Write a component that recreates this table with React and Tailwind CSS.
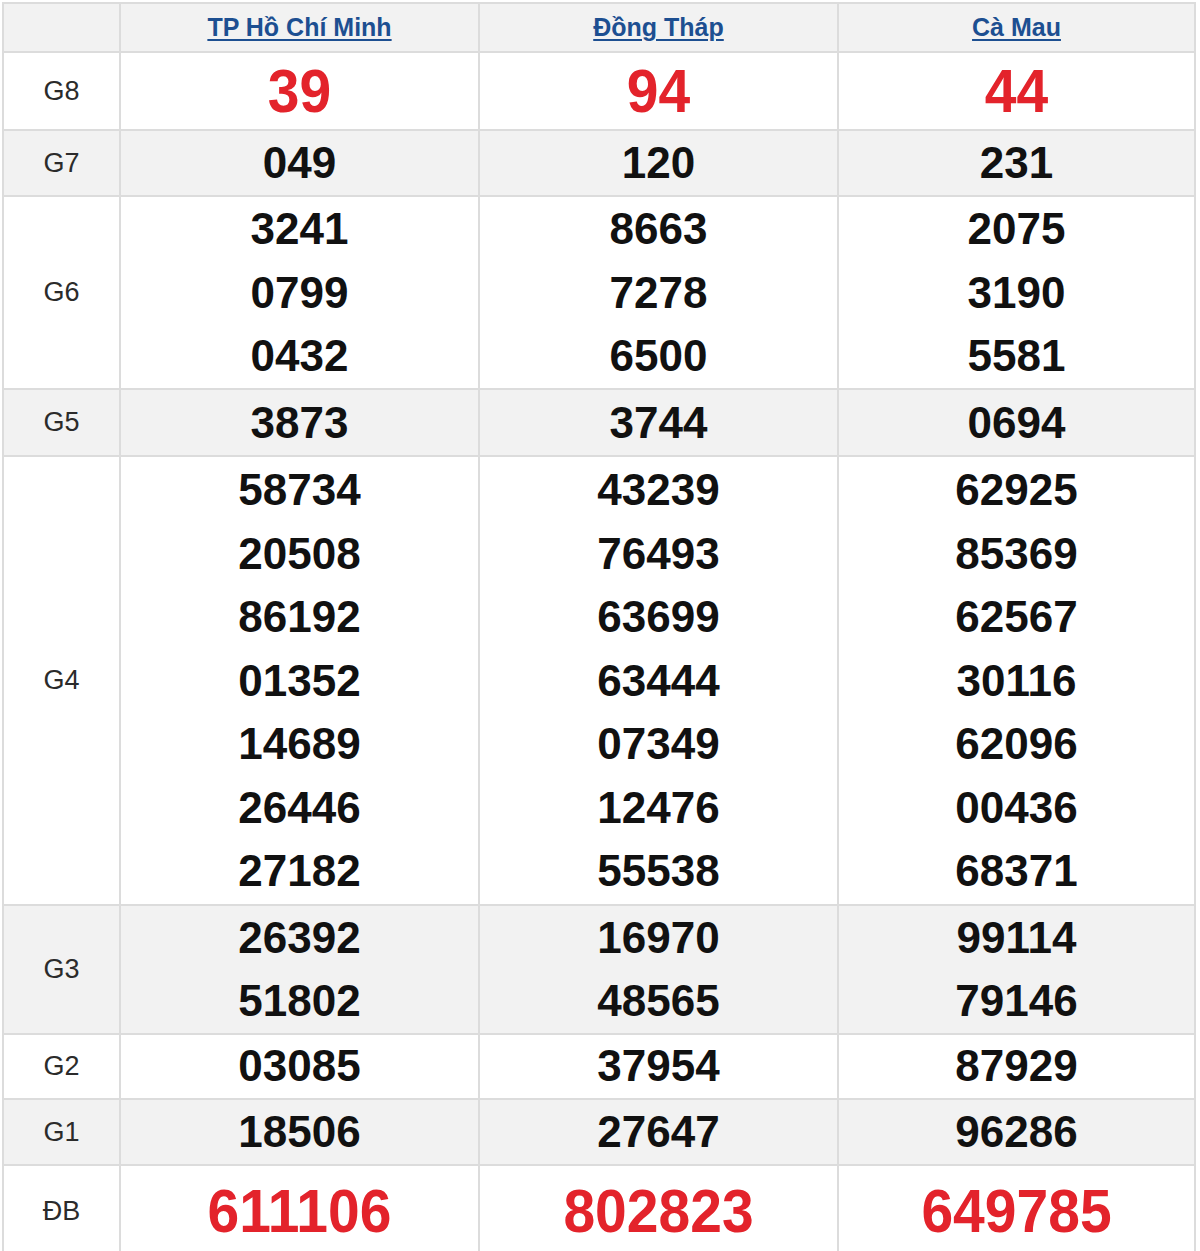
import React from 'react';

const provinces = ['TP Hồ Chí Minh', 'Đồng Tháp', 'Cà Mau'];

// each prize: label, row height, background, and numbers per province
const prizes = [
  { label: 'G8', h: 'h-[78px]', gray: false, red: true, size: 'text-[57px]', nums: [['39'], ['94'], ['44']] },
  { label: 'G7', h: 'h-[66px]', gray: true, nums: [['049'], ['120'], ['231']] },
  {
    label: 'G6',
    h: 'h-[193px]',
    gray: false,
    nums: [
      ['3241', '0799', '0432'],
      ['8663', '7278', '6500'],
      ['2075', '3190', '5581'],
    ],
  },
  { label: 'G5', h: 'h-[67px]', gray: true, nums: [['3873'], ['3744'], ['0694']] },
  {
    label: 'G4',
    h: 'h-[449px]',
    gray: false,
    nums: [
      ['58734', '20508', '86192', '01352', '14689', '26446', '27182'],
      ['43239', '76493', '63699', '63444', '07349', '12476', '55538'],
      ['62925', '85369', '62567', '30116', '62096', '00436', '68371'],
    ],
  },
  {
    label: 'G3',
    h: 'h-[128px]',
    gray: true,
    nums: [
      ['26392', '51802'],
      ['16970', '48565'],
      ['99114', '79146'],
    ],
  },
  { label: 'G2', h: 'h-[66px]', gray: false, nums: [['03085'], ['37954'], ['87929']] },
  { label: 'G1', h: 'h-[66px]', gray: true, nums: [['18506'], ['27647'], ['96286']] },
  { label: 'ĐB', h: 'h-[92px]', gray: false, red: true, size: 'text-[57px]', nums: [['611106'], ['802823'], ['649785']] },
];

const cols = 'grid grid-cols-[117px_359px_359px_357px]';

const ResultRow = ({ prize }) => (
  <div className={`${cols} ${prize.h} ${prize.gray ? 'bg-[#f2f2f2]' : 'bg-white'}`}>
    <div className="flex items-center justify-center border-r-2 border-b-2 border-[#dcdcdc] text-[27px] text-[#2b2b2b]">
      {prize.label}
    </div>
    {prize.nums.map((list, i) => (
      <div
        key={i}
        className="flex flex-col items-center justify-center border-r-2 border-b-2 border-[#dcdcdc]"
      >
        {list.map((n, j) => (
          <div
            key={j}
            className={
              prize.red
                ? `${prize.size} font-bold leading-none text-[#e3232b] scale-y-[1.07]`
                : 'h-[63.5px] flex items-center text-[44px] font-bold leading-none text-[#111111]'
            }
          >
            {n}
          </div>
        ))}
      </div>
    ))}
  </div>
);

const App = () => {
  return (
    <div className="min-h-screen bg-white pt-[2px] pl-[2px] font-['Liberation_Sans',Arial,sans-serif]">
      <div className="w-[1194px] border-l-2 border-t-2 border-[#dcdcdc]">
        {/* header with province names */}
        <div className={`${cols} h-[49px] bg-[#f2f2f2]`}>
          <div className="border-r-2 border-b-2 border-[#dcdcdc]" />
          {provinces.map((p) => (
            <div
              key={p}
              className="flex items-center justify-center border-r-2 border-b-2 border-[#dcdcdc]"
            >
              <a
                href="#"
                className="text-[25px] font-bold leading-none text-[#1d4f91] underline decoration-2 underline-offset-[3px]"
              >
                {p}
              </a>
            </div>
          ))}
        </div>

        {prizes.map((prize) => (
          <ResultRow key={prize.label} prize={prize} />
        ))}
      </div>
    </div>
  );
};

export default App;
